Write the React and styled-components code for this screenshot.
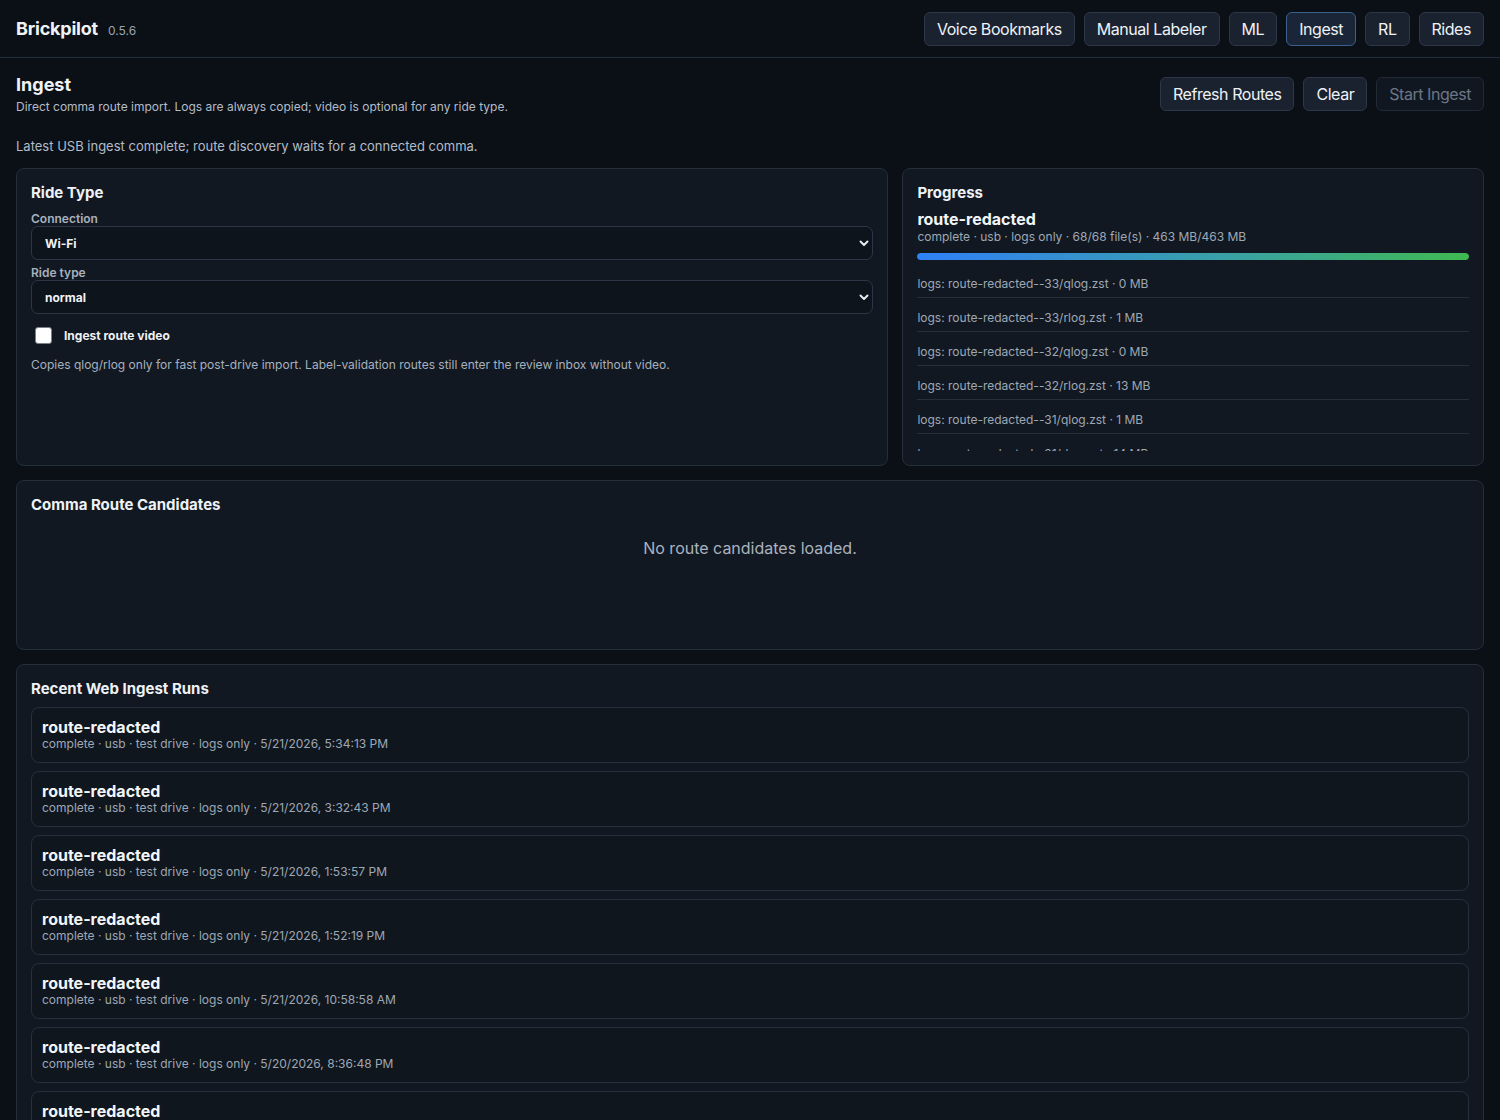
import React from "react";
import styled, { createGlobalStyle, css } from "styled-components";

const Global = createGlobalStyle`
  html, body { margin: 0; padding: 0; background: #0b1017; scrollbar-width: none; }
  html::-webkit-scrollbar, body::-webkit-scrollbar { display: none; }
  body {
    font-family: Inter, "Noto Sans", "Liberation Sans", sans-serif;
    color: #e6edf3;
    -webkit-font-smoothing: antialiased;
  }
  * { box-sizing: border-box; }
`;

const Header = styled.header`
  height: 58px;
  display: flex;
  align-items: center;
  justify-content: space-between;
  padding: 0 16px;
  border-bottom: 1px solid #242d3a;
`;

const Brand = styled.div`
  display: flex;
  align-items: baseline;
  gap: 10px;
`;

const BrandName = styled.span`
  font-size: 18px;
  font-weight: 700;
  letter-spacing: -0.2px;
  color: #f0f3f6;
`;

const Version = styled.span`
  font-size: 12px;
  color: #9aa4b2;
`;

const Nav = styled.nav`
  display: flex;
  gap: 9px;
`;

const Button = styled.button`
  height: 34px;
  padding: 0 12px;
  border-radius: 6px;
  font-family: inherit;
  font-size: 16px;
  letter-spacing: -0.45px;
  color: #eef2f6;
  background: #1a2230;
  border: 1px solid #2d3747;
  cursor: pointer;
  ${(p) =>
    p.$active &&
    css`
      background: #1a2637;
      border-color: #3c618c;
    `}
  ${(p) =>
    p.disabled &&
    css`
      background: #111721;
      border-color: #222a36;
      color: #6c7686;
      cursor: default;
    `}
`;

const Main = styled.main`
  padding: 16px 16px 24px;
  display: flex;
  flex-direction: column;
  gap: 14px;
`;

const TopRow = styled.div`
  display: flex;
  justify-content: space-between;
  align-items: center;
  margin-bottom: 10px;
`;

const PageTitle = styled.h1`
  margin: 0;
  font-size: 18px;
  line-height: 22px;
  font-weight: 700;
  color: #f0f3f6;
`;

const Subtitle = styled.p`
  margin: 3px 0 0;
  font-size: 12px;
  line-height: 15px;
  color: #b3bcc8;
`;

const Actions = styled.div`
  display: flex;
  gap: 9px;
`;

const Status = styled.p`
  margin: 0;
  font-size: 13px;
  line-height: 16px;
  color: #b3bcc8;
`;

const Grid = styled.div`
  display: grid;
  grid-template-columns: 3fr 2fr;
  gap: 14px;
`;

const Panel = styled.section`
  background: #121821;
  border: 1px solid #252e3b;
  border-radius: 8px;
  padding: 14px;
  display: flex;
  flex-direction: column;
`;

const PanelTitle = styled.h2`
  margin: 1px 0 8px;
  font-size: 15px;
  line-height: 18px;
  font-weight: 700;
  color: #eef2f6;
`;

const FieldLabel = styled.label`
  display: block;
  font-size: 12px;
  line-height: 15px;
  font-weight: 600;
  color: #a7b1be;
  margin: 1px 0 0;
`;

const SelectWrap = styled.div`
  position: relative;
  margin-bottom: 4px;
`;

const Select = styled.select`
  appearance: none;
  width: 100%;
  height: 34px;
  padding: 0 36px 0 13px;
  border-radius: 7px;
  background: #0e141c;
  border: 1px solid #2c3646;
  color: #f0f3f6;
  font-family: inherit;
  font-size: 12px;
  font-weight: 700;
`;

const Chevron = styled.svg`
  position: absolute;
  right: 3px;
  top: 50%;
  transform: translateY(-50%);
  pointer-events: none;
`;

const CheckRow = styled.label`
  display: flex;
  align-items: center;
  gap: 12px;
  margin: 9px 0 0 4px;
  font-size: 12px;
  font-weight: 700;
  color: #eef2f6;
`;

const Check = styled.input`
  appearance: none;
  margin: 0;
  width: 17px;
  height: 17px;
  background: #fff;
  border: 1px solid #7b7f86;
  border-radius: 3px;
`;

const Help = styled.p`
  margin: 13px 0 0;
  font-size: 12px;
  line-height: 15px;
  color: #a7b1be;
`;

const RouteName = styled.div`
  font-size: 16px;
  line-height: 19px;
  font-weight: 700;
  color: #f3f6f9;
`;

const Meta = styled.div`
  font-size: 12px;
  line-height: 15px;
  color: #9ea8b5;
`;

const Bar = styled.div`
  margin-top: 9px;
  height: 7px;
  border-radius: 4px;
  background: #222b38;
  overflow: hidden;
`;

const BarFill = styled.div`
  height: 100%;
  border-radius: 4px;
  background: linear-gradient(90deg, #2f81f7 0%, #3aa0a8 55%, #3fb950 100%);
`;

const LogList = styled.div`
  margin-top: 4px;
  height: 187px;
  overflow: hidden;
`;

const LogItem = styled.div`
  padding: 12px 0 5px;
  font-size: 12px;
  line-height: 16px;
  color: #9ea8b5;
  border-bottom: 1px solid #262f3c;
`;

const Empty = styled.div`
  min-height: 113px;
  padding-top: 16px;
  text-align: center;
  font-size: 16px;
  line-height: 20px;
  color: #aab3bf;
`;

const RunList = styled.div`
  display: flex;
  flex-direction: column;
  gap: 8px;
  margin-top: 1px;
`;

const RunItem = styled.div`
  border: 1px solid #262f3c;
  border-radius: 8px;
  background: #10161e;
  padding: 10px 10px 11px;
  line-height: 15px;
`;

const RunMeta = styled(Meta)`
  margin-top: -1px;
`;

const navItems = ["Voice Bookmarks", "Manual Labeler", "ML", "Ingest", "RL", "Rides"];

const logs = [
  "logs: route-redacted--33/qlog.zst · 0 MB",
  "logs: route-redacted--33/rlog.zst · 1 MB",
  "logs: route-redacted--32/qlog.zst · 0 MB",
  "logs: route-redacted--32/rlog.zst · 13 MB",
  "logs: route-redacted--31/qlog.zst · 1 MB",
  "logs: route-redacted--31/rlog.zst · 14 MB",
  "logs: route-redacted--30/qlog.zst · 0 MB",
];

const runs = [
  "5/21/2026, 5:34:13 PM",
  "5/21/2026, 3:32:43 PM",
  "5/21/2026, 1:53:57 PM",
  "5/21/2026, 1:52:19 PM",
  "5/21/2026, 10:58:58 AM",
  "5/20/2026, 8:36:48 PM",
  "5/20/2026, 6:12:05 PM",
  "5/20/2026, 2:41:30 PM",
];

function ChevronIcon() {
  return (
    <Chevron width="12" height="12" viewBox="0 0 12 12">
      <path d="M2.5 4.5 L6 8 L9.5 4.5" fill="none" stroke="#e6edf3" strokeWidth="1.9" strokeLinecap="round" strokeLinejoin="round" />
    </Chevron>
  );
}

export default function App() {
  return (
    <>
      <Global />
      <Header>
        <Brand>
          <BrandName>Brickpilot</BrandName>
          <Version>0.5.6</Version>
        </Brand>
        <Nav>
          {navItems.map((n) => (
            <Button key={n} $active={n === "Ingest"}>
              {n}
            </Button>
          ))}
        </Nav>
      </Header>
      <Main>
        <TopRow>
          <div>
            <PageTitle>Ingest</PageTitle>
            <Subtitle>Direct comma route import. Logs are always copied; video is optional for any ride type.</Subtitle>
          </div>
          <Actions>
            <Button>Refresh Routes</Button>
            <Button>Clear</Button>
            <Button disabled>Start Ingest</Button>
          </Actions>
        </TopRow>
        <Status>Latest USB ingest complete; route discovery waits for a connected comma.</Status>
        <Grid>
          <Panel>
            <PanelTitle>Ride Type</PanelTitle>
            <FieldLabel>Connection</FieldLabel>
            <SelectWrap>
              <Select defaultValue="wifi">
                <option value="wifi">Wi-Fi</option>
                <option value="usb">USB</option>
              </Select>
              <ChevronIcon />
            </SelectWrap>
            <FieldLabel>Ride type</FieldLabel>
            <SelectWrap>
              <Select defaultValue="normal">
                <option value="normal">normal</option>
                <option value="test">test drive</option>
              </Select>
              <ChevronIcon />
            </SelectWrap>
            <CheckRow>
              <Check type="checkbox" />
              Ingest route video
            </CheckRow>
            <Help>
              Copies qlog/rlog only for fast post-drive import. Label-validation routes still enter the review inbox without video.
            </Help>
          </Panel>
          <Panel>
            <PanelTitle>Progress</PanelTitle>
            <RouteName>route-redacted</RouteName>
            <Meta>complete · usb · logs only · 68/68 file(s) · 463 MB/463 MB</Meta>
            <Bar>
              <BarFill style={{ width: "100%" }} />
            </Bar>
            <LogList>
              {logs.map((l) => (
                <LogItem key={l}>{l}</LogItem>
              ))}
            </LogList>
          </Panel>
        </Grid>
        <Panel>
          <PanelTitle>Comma Route Candidates</PanelTitle>
          <Empty>No route candidates loaded.</Empty>
        </Panel>
        <Panel>
          <PanelTitle>Recent Web Ingest Runs</PanelTitle>
          <RunList>
            {runs.map((t) => (
              <RunItem key={t}>
                <RouteName>route-redacted</RouteName>
                <RunMeta>complete · usb · test drive · logs only · {t}</RunMeta>
              </RunItem>
            ))}
          </RunList>
        </Panel>
      </Main>
    </>
  );
}
